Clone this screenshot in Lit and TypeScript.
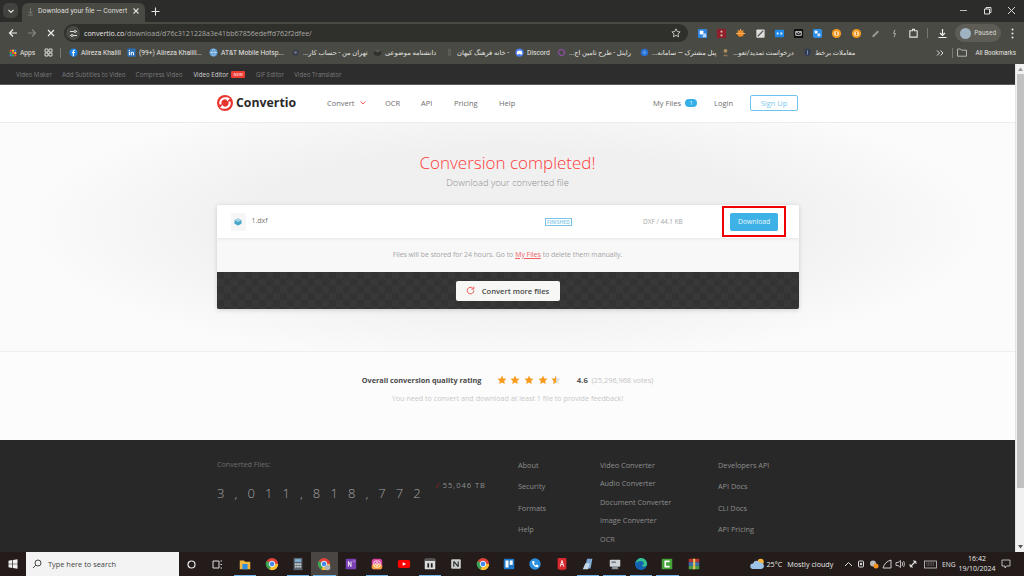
import { LitElement, css, html, svg } from "lit";
import { customElement } from "lit/decorators.js";

// favicon style icons, all in a 12x12 box
const fav: Record<string, any> = {
  fb: svg`<circle cx="6" cy="6" r="5.5" fill="#1b7fe0"/><path d="M6.6 11V6.8h1.3l.2-1.5H6.6v-.9c0-.5.2-.7.7-.7h.8V2.3H7c-1.3 0-2 .7-2 1.9v1.1H3.9v1.5H5V11z" fill="#fff"/>`,
  li: svg`<rect x=".5" y=".5" width="11" height="11" rx="1" fill="#2a6fb5"/><path d="M2.5 5h1.4v4.6H2.5zM2.5 2.6h1.4V4H2.5zM5 5h1.3v.7c.3-.5.8-.8 1.4-.8 1.1 0 1.6.7 1.6 1.9v2.8H8V7.1c0-.6-.2-1-.7-1s-.9.4-.9 1v2.5H5z" fill="#fff"/>`,
  globe: svg`<circle cx="6" cy="6" r="5.3" fill="#5b9bd5"/><path d="M1 6h10M6 1c-3 3-3 7 0 10M6 1c3 3 3 7 0 10" stroke="#d5e6f5" stroke-width=".8" fill="none"/>`,
  dark: svg`<circle cx="6" cy="6" r="4.5" fill="#39404a"/><circle cx="6" cy="6" r="1.8" fill="#6d7580"/>`,
  cube: svg`<path d="M6 1l5 2.5v5L6 11 1 8.500v-5z" fill="#2f2f2d"/><path d="M6 1l5 2.5L6 6 1 3.500z" fill="#56564f"/>`,
  leaf: svg`<path d="M6 1c2 2 2 3 0 5 2 2 2 3 0 5-2-2-2-3 0-5-2-2-2-3 0-5z" fill="none" stroke="#77776f"/>`,
  discord: svg`<circle cx="6" cy="6" r="5.5" fill="#4a7df0"/><path d="M3 4.2c2-1 4-1 6 0l.8 3.800c-.8.6-1.500.8-2 .9L7.300 8H4.700l-.5.9c-.5-.1-1.200-.3-2-.9z" fill="#fff"/>`,
  ring: svg`<circle cx="6" cy="6" r="4" fill="none" stroke="#a050c0" stroke-width="1.8" stroke-dasharray="2 1"/>`,
  blue: svg`<circle cx="6" cy="6" r="5" fill="#2a6ed0"/><path d="M3 6l3-3 3 3-3 3z" fill="#4f93e8"/>`,
  gold: svg`<circle cx="6" cy="3.8" r="2.5" fill="#b0905a"/><path d="M3 11c0-3 6-3 6 0z" fill="#8a7350"/>`,
  navy: svg`<path d="M2 2l4-1 4 1v5c0 2-2 3-4 4-2-1-4-2-4-4z" fill="#2f3a55"/><path d="M6 3v6" stroke="#9aa6c0"/>`,
  apps: svg`<rect x="1" y="1" width="3" height="3" fill="#e8453c"/><rect x="4.5" y="1" width="3" height="3" fill="#f9bb2d"/><rect x="8" y="1" width="3" height="3" fill="#4285f4"/><rect x="1" y="4.5" width="3" height="3" fill="#34a853"/><rect x="4.5" y="4.5" width="3" height="3" fill="#e8453c"/><rect x="8" y="4.5" width="3" height="3" fill="#f9bb2d"/><rect x="1" y="8" width="3" height="3" fill="#4285f4"/><rect x="4.5" y="8" width="3" height="3" fill="#34a853"/><rect x="8" y="8" width="3" height="3" fill="#e8453c"/>`,
};

// extension icons along the toolbar
const extensions = [
  svg`<rect x="1" y="1" width="10" height="10" rx="1" fill="#2f83dc"/><path d="M3 3h4v4H3z" fill="#fff"/><path d="M7 6h3v4H6z" fill="#bcd8f5"/>`,
  svg`<rect x="1" y="1" width="10" height="10" fill="#8e1f2a"/><path d="M5 3h2v2H5zM5 7h2v2H5z" fill="#e8c9b0"/>`,
  svg`<circle cx="6" cy="6" r="3.5" fill="#f08a24"/><path d="M1 6h10M6 1v2M3 2.5l1 1M9 2.5l-1 1" stroke="#f5b36a"/>`,
  svg`<rect x="1.5" y="1.5" width="9" height="9" rx="1" fill="#ddd"/><path d="M3 9l6-6" stroke="#555" stroke-width="1.2"/>`,
  svg`<rect x="1" y="2" width="10" height="8" rx="1" fill="#1e88e5"/><path d="M3 5h2v2H3zM7 5h2v2H7z" fill="#e3f2fd"/>`,
  svg`<rect x="1" y="1" width="10" height="10" rx="1" fill="#111"/><path d="M3 4h6v4H3z" fill="none" stroke="#ddd"/><path d="M3 4l3 2 3-2" fill="none" stroke="#ddd"/>`,
  svg`<rect x="1" y="1" width="10" height="10" rx="2" fill="#2f8de4"/><path d="M3 3h3v3H3z" fill="#fff"/><path d="M6 6h3v3H6z" fill="#cfe5fa"/>`,
  svg`<circle cx="6" cy="6" r="5" fill="#f29a1f"/><circle cx="6" cy="6" r="2.8" fill="#fbd9a8"/><path d="M5.5 4h1.2v4H5.500z" fill="#e07a10"/>`,
  svg`<circle cx="6" cy="6" r="5" fill="#f29a1f"/><circle cx="6" cy="6" r="2.8" fill="#fbd9a8"/><path d="M5.5 4h1.2v4H5.500z" fill="#e07a10"/>`,
  svg`<path d="M2 9l6-6 2 1-6 6z" fill="#9a9a94"/>`,
  svg`<path d="M6.5 2L5 6h2l-1.500 4" stroke="#b8b8b0" fill="none"/>`,
];

const bookmarks = [
  { i: "fb", t: "Alireza Khalili", w: 58 },
  { i: "li", t: "(99+) Alireza Khalili...", w: 82 },
  { i: "globe", t: "AT&T Mobile Hotsp...", w: 82 },
  { i: "dark", t: "تهران من - حساب کار...", w: 82, rtl: true },
  { i: "cube", t: "دانشنامه موضوعی", w: 72, rtl: true },
  { i: "leaf", t: "- خانه فرهنگ کیهان", w: 70, rtl: true },
  { i: "discord", t: "Discord", w: 42 },
  { i: "ring", t: "رایتل - طرح تامین اج...", w: 83, rtl: true },
  { i: "blue", t: "پنل مشترک — سامانه...", w: 81, rtl: true },
  { i: "gold", t: "درخواست تمدید/تعو...", w: 82, rtl: true },
  { i: "navy", t: "معاملات برخط", w: 60, rtl: true },
];

const subnav = [
  { t: "Video Maker" },
  { t: "Add Subtitles to Video" },
  { t: "Compress Video" },
  { t: "Video Editor", on: true },
  { t: "GIF Editor" },
  { t: "Video Translator" },
];

const footerCols = [
  { w: 82, links: ["About", "Security", "Formats", "Help"] },
  { w: 118, links: ["Video Converter", "Audio Converter", "Document Converter", "Image Converter", "OCR"] },
  { w: 80, links: ["Developers API", "API Docs", "CLI Docs", "API Pricing"] },
];

const chromeIcon = svg`<circle cx="8" cy="8" r="7" fill="#e0433a"/><path d="M8 8L15 8A7 7 0 0 1 5 14.300z" fill="#f6c02c"/><path d="M8 8L5 14.300A7 7 0 0 1 1.800 4.500z" fill="#37a553"/><circle cx="8" cy="8" r="3.2" fill="#3f87ee" stroke="#fff"/>`;

// taskbar apps, spaced evenly; run = has the underline of a running app
const taskApps = [
  { run: true, g: svg`<path d="M2 4h5l1 1.500h6V14H2z" fill="#f3b740"/><rect x="5" y="8" width="6" height="6" fill="#2f8fdc"/>` },
  { run: false, g: chromeIcon },
  { run: true, g: svg`<rect x="3" y="1" width="10" height="14" fill="#5c6670"/><rect x="4.5" y="2.5" width="7" height="3" fill="#7fb6d8"/><path d="M4.500 7h2v2h-2zM7 7h2v2H7zM9.500 7h2v2h-2zM4.500 10h2v2h-2zM7 10h2v2H7zM9.500 10h2v2h-2z" fill="#c8ced4"/>` },
  { run: true, active: true, g: svg`${chromeIcon}<circle cx="12" cy="12" r="3.2" fill="#b0b4b8"/>` },
  { run: false, g: svg`<rect x="2" y="2" width="12" height="12" rx="1" fill="#7b3fb5"/><path d="M5 5v6M5 5l3 6V5" stroke="#fff" fill="none"/><rect x="10" y="4" width="3" height="2" fill="#a77bd4"/>` },
  { run: true, g: svg`<rect x="2" y="2" width="12" height="12" rx="3" fill="#d6409f"/><rect x="2" y="8" width="12" height="6" rx="3" fill="#f6a03c"/><rect x="4.5" y="4.5" width="7" height="7" rx="2" fill="none" stroke="#fff"/><circle cx="8" cy="8" r="1.6" fill="none" stroke="#fff"/>` },
  { run: false, g: svg`<rect x="1" y="3.5" width="14" height="9" rx="2" fill="#f00"/><path d="M6.500 6l4 2-4 2z" fill="#fff"/>` },
  { run: true, g: svg`<rect x="2" y="2" width="12" height="12" rx="1" fill="#ddd"/><rect x="2" y="2" width="12" height="2.5" fill="#555"/><path d="M5 7h2v5H5zM9 7h2v5H9z" fill="#222"/>` },
  { run: false, g: svg`<rect x="2.5" y="2.5" width="11" height="11" rx="1.5" fill="#ccc"/><path d="M5.500 5v6M5.500 5l5 6M10.500 5v6" stroke="#222" stroke-width="1.2" fill="none"/>` },
  { run: false, g: chromeIcon },
  { run: false, g: svg`<rect x="2" y="2" width="12" height="12" rx="1.5" fill="#1d78c8"/><rect x="4" y="4" width="3.4" height="8" fill="#fff"/><rect x="8.8" y="4" width="3.4" height="5" fill="#fff"/>` },
  { run: false, g: svg`<circle cx="8" cy="8" r="6.5" fill="#2b8fe0"/><path d="M5 4.500l2 .2.700 2-1 .8c.5 1 1.200 1.700 2.200 2.200l.8-1 2 .7.200 2c-3.500 1.200-8-3.300-6.900-6.900z" fill="#fff"/>` },
  { run: false, g: svg`<rect x="3" y="1" width="10" height="13" rx="1" fill="#d9282f"/><path d="M6 11l2-7 2 7M6.800 8.500h2.400" stroke="#fff" fill="none"/><rect x="5" y="14" width="6" height="1" fill="#d9282f"/>` },
  { run: true, g: svg`<path d="M4 13L7 2h6l-2 11z" fill="#7ea8d4"/><path d="M2 14l3-7h5l-2 7z" fill="#c5d8ea"/>` },
  { run: true, g: svg`<rect x="2" y="3" width="12" height="8" rx="1" fill="#cfd4d8"/><path d="M5 11h6l1 3H4z" fill="#8d9499"/><path d="M4 5h5v2H4z" fill="#7c8388"/>` },
  { run: true, g: svg`<circle cx="8" cy="8" r="7" fill="#1560b0"/><path d="M8 1a7 7 0 0 1 7 7c0 2-2 3-4 3-1.500 0-2-1-2-1.500 3 0 3-4.500-1-5-2.500-.2-5 1-6 3C2.500 4 5 1 8 1z" fill="#35c28a"/>` },
  { run: true, g: svg`<rect x="2" y="2" width="12" height="12" rx="1" fill="#45a33a"/><path d="M11 5H6v6h5" stroke="#fff" stroke-width="1.8" fill="none"/>` },
  { run: false, g: svg`<rect x="2" y="2" width="12" height="4" fill="#b8362f"/><rect x="2" y="6" width="12" height="4" fill="#3d6fb5"/><rect x="2" y="10" width="12" height="4" fill="#4c9a45"/><rect x="7" y="2" width="2.4" height="12" fill="#e8c65a"/>` },
];

@customElement("app-root")
export class AppRoot extends LitElement {
  static styles = css`
    :host { display: flex; flex-direction: column; width: 1024px; height: 576px; overflow: hidden; font-family: "Open Sans", "DejaVu Sans", sans-serif; background: #fff; }
    svg { display: block; flex: none; }

    /* browser chrome */
    .tabstrip { height: 22px; flex: none; background: #2c2c2a; display: flex; align-items: flex-end; padding-left: 3px; box-sizing: border-box; }
    .tabmenu { width: 15px; height: 15px; margin-bottom: 4px; border-radius: 5px; background: #42423e; display: flex; align-items: center; justify-content: center; flex: none; }
    .tab { width: 123px; height: 19px; margin-left: 4px; background: #4a4a44; border-radius: 6px 6px 0 0; display: flex; align-items: center; padding: 0 5px 3px 5px; box-sizing: border-box; color: #dcdcd8; font-family: Roboto, sans-serif; font-size: 6.9px; white-space: nowrap; flex: none; }
    .tab span { flex: 1; margin-left: 4px; }
    .newtab { margin: 0 0 3px 2px; width: 16px; height: 16px; display: flex; align-items: center; justify-content: center; flex: none; }
    .winctl { margin-left: auto; display: flex; align-self: flex-start; padding-top: 6px; gap: 15px; padding-right: 8px; }

    .toolbar { height: 21px; flex: none; background: #4a4a44; display: flex; align-items: center; padding: 1px 0 0 3px; box-sizing: border-box; }
    .navbtn { width: 19px; display: flex; justify-content: center; flex: none; }
    .omni { width: 624px; height: 18px; margin-left: 4px; background: #2f2f2c; border-radius: 9px; display: flex; align-items: center; padding: 0 7px 0 2px; box-sizing: border-box; flex: none; }
    .tune { width: 14px; height: 14px; border-radius: 50%; background: #4a4a44; display: flex; align-items: center; justify-content: center; flex: none; }
    .url { margin-left: 4px; font-size: 7.05px; color: #a9a9a3; flex: 1; white-space: nowrap; }
    .url b { font-weight: 400; color: #e6e6e2; }
    .exts { display: flex; margin-left: 5px; flex: none; }
    .ext { width: 19.2px; display: flex; justify-content: center; flex: none; }
    .vsep { width: 1px; height: 10px; background: #77776f; flex: none; }
    .sep-tool { margin-left: 4px; }
    .dl-btn { margin-left: 5px; }
    .menu-btn { margin-left: 2px; }
    .paused { width: 46px; height: 18px; background: #5d5d56; border-radius: 9px; display: flex; align-items: center; gap: 3px; padding-left: 5px; box-sizing: border-box; font-family: Roboto, sans-serif; font-size: 6.6px; color: #d6d6d0; flex: none; margin-left: 3px; }
    .avatar { width: 11px; height: 11px; border-radius: 50%; background: #9fb2c2; flex: none; }

    .bookmarks { height: 21px; flex: none; background: #4a4a44; display: flex; align-items: center; padding: 0 0 2px 9px; box-sizing: border-box; color: #e4e4e0; font-family: Roboto, "DejaVu Sans", sans-serif; font-size: 6.7px; white-space: nowrap; }
    .bm { display: flex; align-items: center; gap: 3px; flex: none; overflow: hidden; }
    .bm.rtl span { direction: rtl; }
    .bm-apps { width: 30px; }
    .grid { margin-left: 5px; }
    .sep-bm { margin: 0 8px 0 7px; }
    .bm-end { margin-left: auto; display: flex; align-items: center; padding-right: 8px; }
    .sep-end { margin: 0 4px 0 8px; }
    .folder { margin-right: 8px; }
    .all { font-size: 6.3px; }

    /* page + scrollbar */
    .viewport { height: 488px; flex: none; display: flex; }
    .page { flex: 1; min-width: 0; display: flex; flex-direction: column; overflow: hidden; }
    .scrollbar { width: 9px; flex: none; background: #f1f1f1; border-left: 1px solid #e4e4e4; box-sizing: border-box; display: flex; flex-direction: column; align-items: center; }
    .sb-arrow { height: 10px; flex: none; display: flex; align-items: center; justify-content: center; }
    .sb-thumb { width: 7px; height: 414px; background: #c1c1c1; flex: none; }
    .sb-space { flex: 1; }

    .subnav { height: 21px; flex: none; background: #2d2d2d; border-bottom: 1px solid #5a5a5a; box-sizing: border-box; display: flex; align-items: center; padding-left: 16px; gap: 10px; font-size: 6.2px; color: #7b7b7b; white-space: nowrap; }
    .subnav .on { color: #d4d4d4; display: flex; align-items: center; gap: 3px; margin: 0 1px; }
    .new { background: #ef3b36; color: #fff; font-size: 4.2px; padding: 1px 2px; line-height: 5px; border-radius: 1px; }

    .header { height: 38px; flex: none; background: #fff; border-bottom: 1px solid #ececec; box-sizing: border-box; display: flex; align-items: center; padding: 0 217px 2px; font-size: 7.5px; color: #6d6d6d; white-space: nowrap; }
    .logo { display: flex; align-items: center; gap: 3px; font-size: 12.3px; font-weight: 700; color: #2b2b2b; width: 110px; flex: none; }
    .nav { display: flex; align-items: center; flex: none; }
    .nav > span { flex: none; }
    .convert { display: flex; align-items: center; gap: 5px; width: 58px; }
    .ocr { width: 36px; } .api { width: 33px; } .pricing { width: 45px; }
    .right { margin-left: auto; display: flex; align-items: center; flex: none; }
    .pill { width: 12px; height: 8px; border-radius: 4px; background: #35afe8; color: #fff; font-size: 5.5px; text-align: center; line-height: 8px; margin: 0 17px 0 4px; }
    .signup { width: 48px; height: 16px; margin-left: 17px; border: 1px solid #6cc4ee; border-radius: 2px; box-sizing: border-box; color: #7cc9ee; display: flex; align-items: center; justify-content: center; }

    .main { height: 229px; flex: none; background: radial-gradient(ellipse 480px 140px at 50% 45%, #f0f0f0 55%, #fbfbfb 100%); border-bottom: 1px solid #eeeeee; box-sizing: border-box; display: flex; flex-direction: column; align-items: center; }
    h1 { margin: 28px 0 0; font-size: 17px; font-weight: 300; line-height: 24px; color: #ff3b3b; }
    .lead { margin: 1px 0 0; font-size: 9.3px; line-height: 14px; color: #8f8f8f; font-weight: 300; }
    .card { width: 582px; margin-top: 15px; border-radius: 2px; box-shadow: 0 1px 5px rgba(0,0,0,.16); overflow: hidden; background: #f8f8f8; flex: none; }
    .file { height: 33px; background: #fff; box-shadow: 0 1px 3px rgba(0,0,0,.08); display: flex; align-items: center; padding: 0 14px; position: relative; }
    .fileicon { width: 15px; height: 18px; background: #f6f6f6; border-radius: 2px; display: flex; align-items: center; justify-content: center; flex: none; }
    .fname { margin-left: 6px; font-size: 7px; color: #777; width: 293px; flex: none; margin-top: -2px; }
    .status { font-size: 5px; color: #79c4e8; border: 1px solid #79c4e8; padding: 0 1.5px; line-height: 6px; flex: none; font-weight: 600; }
    .size { margin-left: 71px; font-size: 6.4px; color: #a6a6a6; width: 79px; flex: none; white-space: nowrap; }
    .dl-wrap { border: 2px solid #f00000; padding: 4.5px 6px; flex: none; }
    .dl { width: 48px; height: 18px; background: #3eb2e6; color: #eaf7fd; border-radius: 2px; font-size: 6.8px; display: flex; align-items: center; justify-content: center; }
    .note { height: 34px; padding-bottom: 1px; box-sizing: border-box; display: flex; align-items: center; justify-content: center; gap: 2px; font-size: 6.85px; color: #a5a5a5; background: #f8f8f8; white-space: pre; }
    .note a { color: #f0625f; text-decoration: underline; }
    .more { height: 37px; display: flex; align-items: center; justify-content: center; background-color: #333; background-image: conic-gradient(#383838 25%, transparent 0 50%, #383838 0 75%, transparent 0); background-size: 14px 14px; }
    .morebtn { width: 104px; height: 20px; background: #f7f7f5; border-radius: 2px; display: flex; align-items: center; justify-content: center; gap: 7px; font-size: 7.6px; font-weight: 600; color: #4a4a4a; }

    .rating { height: 88px; flex: none; background: #fcfcfc; display: flex; flex-direction: column; align-items: center; padding-top: 20px; box-sizing: border-box; }
    .rate-line { display: flex; align-items: center; height: 16px; white-space: nowrap; }
    .rate-line strong { color: #4a4a4a; font-size: 7.3px; font-weight: 700; width: 135px; flex: none; }
    .stars { display: flex; gap: 3.7px; width: 80px; flex: none; }
    .score { font-weight: 700; color: #555; font-size: 7.8px; width: 15px; flex: none; }
    .votes { color: #c4c4c4; font-size: 7.3px; }
    .hint { margin-top: 3px; font-size: 7.2px; line-height: 14px; color: #c8c8c8; }

    .footer { flex: 1; min-height: 0; background: #282828; display: flex; padding: 20px 0 0 217px; color: #8d8d8d; overflow: hidden; }
    .stats { width: 301px; flex: none; margin-top: -1px; }
    .stats small { display: block; font-size: 7.2px; line-height: 11px; color: #6e6e6e; }
    .count-row { display: flex; margin-top: 15px; }
    .count { font-size: 13px; font-weight: 300; letter-spacing: 10.1px; line-height: 16px; color: #a4a4a4; width: 219px; white-space: nowrap; flex: none; }
    .total { font-size: 7.5px; line-height: 10px; letter-spacing: 1px; color: #8f8f8f; margin-top: -5px; white-space: nowrap; }
    .total i { color: #b0201e; margin-right: 3px; }
    .col { flex: none; display: flex; flex-direction: column; }
    .col span { height: 21.4px; line-height: 11px; font-size: 7.3px; white-space: nowrap; color: #8e8e8e; }

    /* windows taskbar */
    .taskbar { height: 24px; flex: none; background: #231c1a; display: flex; align-items: center; color: #e8e8e8; }
    .start { width: 26px; display: flex; justify-content: center; flex: none; }
    .search { width: 153px; height: 24px; background: #f3f3f3; display: flex; align-items: center; gap: 6px; padding-left: 6px; box-sizing: border-box; font-size: 7.4px; color: #444; flex: none; }
    .cortana { width: 25px; display: flex; justify-content: center; flex: none; }
    .apps { display: flex; flex: none; height: 24px; margin-left: 3px; }
    .app { width: 26.4px; height: 24px; display: flex; align-items: center; justify-content: center; position: relative; flex: none; box-sizing: border-box; }
    .app.active { background: #4a4644; }
    .app.run::after { content: ""; position: absolute; left: 2px; right: 2px; bottom: 0; height: 1.5px; background: #76b9ed; }
    .tray { margin-left: auto; display: flex; align-items: center; height: 24px; font-size: 7.2px; flex: none; white-space: nowrap; padding-right: 8px; }
    .weather { display: flex; align-items: center; gap: 1px; width: 94.5px; flex: none; }
    .sky { margin-left: 4px; }
    .trayicons { display: flex; align-items: center; gap: 3px; flex: none; }
    .kbd { margin-left: 2.5px; }
    .eng { margin-left: 5.5px; font-size: 6.6px; width: 16px; flex: none; }
    .clock { font-size: 7px; line-height: 10px; text-align: center; width: 38px; flex: none; }
    .notify { width: 20px; display: flex; justify-content: center; flex: none; }
  `;

  private star(fill: string, half = false) {
    const d = "M6 .6l1.600 3.500 3.800.4-2.800 2.600.8 3.800L6 9 2.600 10.900l.8-3.800L.6 4.500l3.800-.4z";
    return html`<svg width="10" height="10" viewBox="0 0 12 12">
      <path d=${d} fill=${half ? "#dcdcdc" : fill}></path>
      ${half ? svg`<path d="M6 .6L4.400 4.100l-3.800.4 2.800 2.600-.8 3.800L6 9z" fill=${fill}></path>` : ""}
    </svg>`;
  }

  private renderChrome() {
    return html`
      <div class="tabstrip">
        <div class="tabmenu"><svg width="8" height="8" viewBox="0 0 8 8"><path d="M1.5 3L4 5.500 6.500 3" stroke="#ddd" stroke-width="1.2" fill="none"></path></svg></div>
        <div class="tab">
          <svg width="7" height="9" viewBox="0 0 7 9"><path d="M3.500 1v5M1.500 4.500l2 2 2-2M1 8h5" stroke="#77776f" fill="none"></path></svg>
          <span>Download your file — Convert</span>
          <svg width="8" height="8" viewBox="0 0 8 8"><path d="M1.5 1.500l5 5M6.500 1.500l-5 5" stroke="#e0e0dc" stroke-width="1.1"></path></svg>
        </div>
        <div class="newtab"><svg width="9" height="9" viewBox="0 0 9 9"><path d="M4.500 .5v8M.5 4.500h8" stroke="#e6e6e2" stroke-width="1.1"></path></svg></div>
        <div class="winctl">
          <svg width="9" height="9" viewBox="0 0 9 9"><path d="M1 4.500h7" stroke="#bbb"></path></svg>
          <svg width="9" height="9" viewBox="0 0 9 9"><path d="M1.5 3h5v5h-5zM3 3V1.500h5v5H6.500" stroke="#ddd" fill="none"></path></svg>
          <svg width="9" height="9" viewBox="0 0 9 9"><path d="M1 1l7 7M8 1L1 8" stroke="#ddd"></path></svg>
        </div>
      </div>
      <div class="toolbar">
        <div class="navbtn"><svg width="10" height="10" viewBox="0 0 10 10"><path d="M9 5H1.500M5 1.500L1.500 5 5 8.500" stroke="#eee" stroke-width="1.2" fill="none"></path></svg></div>
        <div class="navbtn"><svg width="10" height="10" viewBox="0 0 10 10"><path d="M1 5h7.500M5 1.500L8.500 5 5 8.500" stroke="#85857e" stroke-width="1.2" fill="none"></path></svg></div>
        <div class="navbtn"><svg width="10" height="10" viewBox="0 0 10 10"><path d="M2 2l6 6M8 2L2 8" stroke="#eee" stroke-width="1.2"></path></svg></div>
        <div class="omni">
          <div class="tune"><svg width="9" height="9" viewBox="0 0 9 9"><path d="M1 2.500h4M7 2.500h1M1 6.500h1M4 6.500h4" stroke="#ddd"></path><circle cx="6" cy="2.5" r="1" fill="none" stroke="#ddd"></circle><circle cx="3" cy="6.5" r="1" fill="none" stroke="#ddd"></circle></svg></div>
          <div class="url"><b>convertio.co</b>/download/d76c3121228a3e41bb67856edeffd762f2dfee/</div>
          <svg width="10" height="10" viewBox="0 0 12 12"><path d="M6 1l1.500 3.300 3.500.4-2.600 2.400.7 3.500L6 8.800 2.900 10.600l.7-3.500L1 4.700l3.500-.4z" fill="none" stroke="#d8d8d4"></path></svg>
        </div>
        <div class="exts">
          ${extensions.map((g) => html`<div class="ext"><svg width="11" height="11" viewBox="0 0 12 12">${g}</svg></div>`)}
          <div class="ext"><svg width="11" height="11" viewBox="0 0 12 12"><path d="M2 3h3V1.500h2V3h3v7H2z" fill="none" stroke="#e6e6e2" stroke-width="1.2"></path></svg></div>
        </div>
        <div class="vsep sep-tool"></div>
        <div class="navbtn dl-btn"><svg width="11" height="11" viewBox="0 0 11 11"><path d="M5.500 1v6M3 5l2.500 2.500L8 5M1.500 9.500h8" stroke="#eee" stroke-width="1.2" fill="none"></path></svg></div>
        <div class="paused"><div class="avatar"></div>Paused</div>
        <div class="navbtn menu-btn"><svg width="3" height="11" viewBox="0 0 3 11"><circle cx="1.5" cy="1.5" r="1" fill="#eee"></circle><circle cx="1.5" cy="5.5" r="1" fill="#eee"></circle><circle cx="1.5" cy="9.5" r="1" fill="#eee"></circle></svg></div>
      </div>
      <div class="bookmarks">
        <div class="bm bm-apps"><svg width="8" height="8" viewBox="0 0 12 12">${fav.apps}</svg><span>Apps</span></div>
        <svg class="grid" width="9" height="9" viewBox="0 0 9 9"><path d="M1 1h3v3H1zM5 1h3v3H5zM1 5h3v3H1zM5 5h3v3H5z" fill="none" stroke="#e4e4e0" stroke-width=".9"></path></svg>
        <div class="vsep sep-bm"></div>
        ${bookmarks.map((b) => html`
          <div class="bm ${b.rtl ? "rtl" : ""}" style="width:${b.w}px">
            <svg width="9" height="9" viewBox="0 0 12 12">${fav[b.i]}</svg>
            <span>${b.t}</span>
          </div>`)}
        <div class="bm-end">
          <svg width="8" height="8" viewBox="0 0 8 8"><path d="M1 1.500L3.500 4 1 6.500M4.500 1.500L7 4 4.500 6.500" stroke="#ddd" fill="none"></path></svg>
          <div class="vsep sep-end"></div>
          <svg class="folder" width="10" height="9" viewBox="0 0 10 9"><path d="M.5 1h3l1 1.200h5v6h-9z" fill="none" stroke="#ccc" stroke-width=".8"></path></svg>
          <span class="all">All Bookmarks</span>
        </div>
      </div>
    `;
  }

  private renderPage() {
    return html`
      <div class="subnav">
        ${subnav.map((s) => s.on
          ? html`<span class="on">${s.t}<span class="new">NEW</span></span>`
          : html`<span>${s.t}</span>`)}
      </div>
      <div class="header">
        <div class="logo">
          <svg width="16" height="16" viewBox="0 0 16 16">
            <circle cx="8" cy="8" r="8" fill="#e8342f"></circle>
            <path d="M3.6 9.500A4.600 4.600 0 0 1 10.600 4.200" fill="none" stroke="#fff" stroke-width="2"></path>
            <path d="M12.400 6.500A4.600 4.600 0 0 1 5.400 11.800" fill="none" stroke="#fff" stroke-width="2"></path>
            <path d="M9.500 1.800L13 3.600 10 6.600zM6.500 14.200L3 12.400 6 9.400z" fill="#fff"></path>
          </svg>
          Convertio
        </div>
        <div class="nav">
          <span class="convert">Convert <svg width="6" height="4" viewBox="0 0 6 4"><path d="M.5.500L3 3 5.500.500" stroke="#f2605c" fill="none"></path></svg></span>
          <span class="ocr">OCR</span>
          <span class="api">API</span>
          <span class="pricing">Pricing</span>
          <span>Help</span>
        </div>
        <div class="right">
          <span>My Files</span><span class="pill">1</span>
          <span>Login</span>
          <span class="signup">Sign Up</span>
        </div>
      </div>
      <div class="main">
        <h1>Conversion completed!</h1>
        <p class="lead">Download your converted file</p>
        <div class="card">
          <div class="file">
            <div class="fileicon"><svg width="8" height="8" viewBox="0 0 8 8"><path d="M4 .5L7.500 2.300v3.500L4 7.500.5 5.800V2.300z" fill="#4aa6c8"></path><path d="M4 .5L7.500 2.300 4 4 .5 2.300z" fill="#a8d6e6"></path></svg></div>
            <div class="fname">1.dxf</div>
            <div class="status">FINISHED</div>
            <div class="size">DXF / 44.1 KB</div>
            <div class="dl-wrap"><div class="dl">Download</div></div>
          </div>
          <div class="note"><span>Files will be stored for 24 hours. Go to</span><a>My Files</a><span>to delete them manually.</span></div>
          <div class="more">
            <div class="morebtn">
              <svg width="9" height="9" viewBox="0 0 9 9"><path d="M7.800 4.500A3.300 3.300 0 1 1 6.800 2.200" fill="none" stroke="#ef5a55"></path><path d="M7.800 .6v2.500H5.300" fill="none" stroke="#ef5a55"></path></svg>
              Convert more files
            </div>
          </div>
        </div>
      </div>
      <div class="rating">
        <div class="rate-line">
          <strong>Overall conversion quality rating</strong>
          <div class="stars">
            ${[0, 1, 2, 3].map(() => this.star("#f79a1e"))}
            ${this.star("#f79a1e", true)}
          </div>
          <span class="score">4.6</span>
          <span class="votes">(25,296,968 votes)</span>
        </div>
        <div class="hint">You need to convert and download at least 1 file to provide feedback!</div>
      </div>
      <div class="footer">
        <div class="stats">
          <small>Converted Files:</small>
          <div class="count-row">
            <div class="count">3,011,818,772</div>
            <div class="total"><i>/</i>55,046 TB</div>
          </div>
        </div>
        ${footerCols.map((c) => html`
          <div class="col" style="width:${c.w}px">
            ${c.links.map((l) => html`<span>${l}</span>`)}
          </div>`)}
      </div>
    `;
  }

  private renderTaskbar() {
    return html`
      <div class="taskbar">
        <div class="start"><svg width="10" height="10" viewBox="0 0 10 10"><path d="M.5 1.700l3.800-.6v3.600H.5zM5 1l4.500-.7v4.400H5zM.5 5.300h3.800v3.600L.5 8.300zM5 5.300h4.500v4.400L5 9z" fill="#f2f2f2"></path></svg></div>
        <div class="search">
          <svg width="10" height="10" viewBox="0 0 10 10"><circle cx="6" cy="4" r="3" fill="none" stroke="#333" stroke-width=".9"></circle><path d="M3.800 6.200L1 9" stroke="#333" stroke-width=".9"></path></svg>
          Type here to search
        </div>
        <div class="cortana"><svg width="9" height="9" viewBox="0 0 9 9"><circle cx="4.5" cy="4.5" r="3.5" fill="none" stroke="#e8e8e8" stroke-width="1.2"></circle></svg></div>
        <div class="cortana"><svg width="10" height="9" viewBox="0 0 10 9"><path d="M1 1h6v7H1zM8.500 1H10M8.500 8H10M8.500 4.500H10" fill="none" stroke="#ddd"></path></svg></div>
        <div class="apps">
          ${taskApps.map((a) => html`
            <div class="app ${a.run ? "run" : ""} ${a.active ? "active" : ""}">
              <svg width="14" height="14" viewBox="0 0 16 16">${a.g}</svg>
            </div>`)}
        </div>
        <div class="tray">
          <div class="weather">
            <svg width="16" height="14" viewBox="0 0 18 15"><circle cx="12" cy="5" r="3.5" fill="#f6b73c"></circle><path d="M3 13a3 3 0 0 1 .5-6 4 4 0 0 1 7.500-1 3.500 3.500 0 0 1 2 7z" fill="#9dc3e6"></path></svg>
            <span>25°C</span><span class="sky">Mostly cloudy</span>
          </div>
          <div class="trayicons">
            <svg width="9" height="9" viewBox="0 0 9 9"><path d="M1 6l3.500-3.500L8 6" stroke="#ddd" fill="none"></path></svg>
            <svg width="10" height="10" viewBox="0 0 10 10"><rect x="2.5" y="2" width="5" height="6" rx="1" fill="none" stroke="#ddd"></rect><circle cx="5" cy="5" r="1.2" fill="#ddd"></circle></svg>
            <svg width="10" height="10" viewBox="0 0 10 10"><circle cx="4" cy="4.5" r="3" fill="#bbb"></circle><circle cx="7" cy="7" r="2.5" fill="#f5921e"></circle></svg>
            <svg width="10" height="10" viewBox="0 0 10 10"><path d="M1 9c1-4 4-7 8-8v8z" fill="none" stroke="#ccc"></path></svg>
            <svg width="10" height="10" viewBox="0 0 10 10"><path d="M1 3.500h2L5.500 1.500v7L3 6.500H1zM7 3c.8 1.300.8 2.700 0 4M8.500 2c1.200 2 1.200 4 0 6" fill="none" stroke="#ddd" stroke-width=".8"></path></svg>
            <svg width="10" height="10" viewBox="0 0 10 10"><path d="M2 8l6-6M1.500 5.500l3 3M5.500 1.500l3 3" stroke="#ddd" stroke-width="1.2"></path></svg>
            <svg class="kbd" width="13" height="9" viewBox="0 0 13 9"><rect x=".5" y="1" width="12" height="7" fill="none" stroke="#ccc" stroke-width=".8"></rect><path d="M2.500 3h8M2.500 5h8" stroke="#aaa" stroke-width=".7" stroke-dasharray="1 .6"></path></svg>
          </div>
          <span class="eng">ENG</span>
          <div class="clock">16:42<br />19/10/2024</div>
          <div class="notify"><svg width="10" height="10" viewBox="0 0 10 10"><path d="M1 1h8v6H5.500L4 9V7H1z" fill="none" stroke="#ddd" stroke-width=".8"></path></svg></div>
        </div>
      </div>
    `;
  }

  render() {
    return html`
      ${this.renderChrome()}
      <div class="viewport">
        <div class="page">${this.renderPage()}</div>
        <div class="scrollbar">
          <div class="sb-arrow"><svg width="5" height="4" viewBox="0 0 5 4"><path d="M2.500 .5L5 4H0z" fill="#999"></path></svg></div>
          <div class="sb-thumb"></div>
          <div class="sb-space"></div>
          <div class="sb-arrow"><svg width="5" height="4" viewBox="0 0 5 4"><path d="M0 0h5L2.500 3.500z" fill="#555"></path></svg></div>
        </div>
      </div>
      ${this.renderTaskbar()}
    `;
  }
}
